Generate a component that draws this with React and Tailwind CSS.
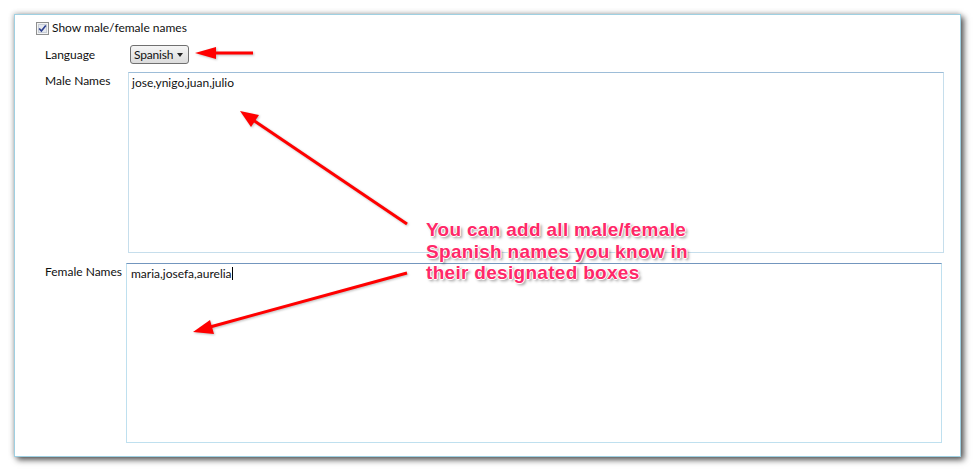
import React from "react";

function Checkbox() {
  return (
    <svg width="13" height="13" viewBox="0 0 13 13" className="shrink-0">
      <rect x="0.5" y="0.5" width="12" height="12" fill="#f4f4f4" stroke="#8e8f8f" />
      <rect x="2.5" y="2.5" width="8" height="8" fill="#e6e9ee" stroke="#c7cdd6" />
      <path d="M3.2 6.4 L5.4 9 L9.8 3.4" fill="none" stroke="#2d3f8f" strokeWidth="1.6" />
    </svg>
  );
}

function Arrows() {
  return (
    <svg
      width="975"
      height="471"
      className="absolute inset-0 pointer-events-none [filter:drop-shadow(1px_1px_1px_rgba(0,0,0,0.25))]"
    >
      {/* language arrow */}
      <line x1="253" y1="53" x2="214" y2="53" stroke="#ff0000" strokeWidth="3" />
      <polygon points="195,53 216,47 216,59" fill="#ff0000" />
      {/* male names arrow */}
      <line x1="407" y1="224" x2="253" y2="120" stroke="#ff0000" strokeWidth="3" />
      <polygon points="240,111 259,115 251,127" fill="#ff0000" />
      {/* female names arrow */}
      <line x1="407" y1="273" x2="210" y2="327" stroke="#ff0000" strokeWidth="3" />
      <polygon points="193,332 210,320 214,334" fill="#ff0000" />
    </svg>
  );
}

export default function App() {
  return (
    <div className="relative w-[975px] h-[471px] bg-white overflow-hidden font-['Lato',sans-serif] text-[12px] leading-[16px] text-[#111]">
      <div className="ml-[14px] mt-[14px] w-[947px] h-[443px] border border-[#9fd0e2] bg-white shadow-[3px_3px_6px_rgba(0,0,0,0.65),-1px_-1px_5px_rgba(0,0,0,0.2)]">
        <div className="pl-[21px] pt-[5px]">
          {/* checkbox row */}
          <div className="flex items-center gap-[3px] h-[16px]">
            <Checkbox />
            <span className="whitespace-nowrap">Show male/female names</span>
          </div>

          {/* language */}
          <div className="flex items-center mt-[9px] h-[19px]">
            <span className="ml-[9px] w-[85px]">Language</span>
            <div className="flex items-center w-[59px] h-[19px] pl-[3px] rounded-[3px] border border-[#707070] bg-gradient-to-b from-[#f5f5f5] to-[#dcdcdc]">
              <span className="tracking-[-0.2px]">Spanish</span>
              <svg width="6" height="4" viewBox="0 0 6 4" className="ml-[4px] shrink-0">
                <polygon points="0,0 6,0 3,4" fill="#222" />
              </svg>
            </div>
          </div>

          {/* male names */}
          <div className="flex mt-[8px]">
            <span className="ml-[9px] w-[83px] pt-[1px] whitespace-nowrap">Male Names</span>
            <div className="w-[816px] h-[181px] border border-[#c6deec] border-t-[#9dbdd8] px-[3px] pt-[2px]">
              jose,ynigo,juan,julio
            </div>
          </div>

          {/* female names */}
          <div className="flex mt-[10px]">
            <span className="ml-[9px] w-[81px] pt-[1px] whitespace-nowrap">Female Names</span>
            <div className="w-[816px] h-[180px] border border-[#bfe0ef] border-t-[#7396be] px-[4px] pt-[2px]">
              maria,josefa,aurelia
              <span className="inline-block w-px h-[13px] bg-black align-[-2px]"></span>
            </div>
          </div>
        </div>
      </div>

      <Arrows />

      {/* annotation */}
      <div className="absolute left-[426px] top-[219px] font-['Liberation_Sans',Arial,sans-serif] font-bold text-[19px] leading-[21.5px] text-[#ff2868] tracking-[0.3px] [text-shadow:-1px_0_0_#fff,1px_0_0_#fff,0_-1px_0_#fff,0_1px_0_#fff,2px_2px_3px_rgba(0,0,0,0.45)]">
        <div>You can add all male/female</div>
        <div>Spanish names you know in</div>
        <div>their designated boxes</div>
      </div>
    </div>
  );
}
